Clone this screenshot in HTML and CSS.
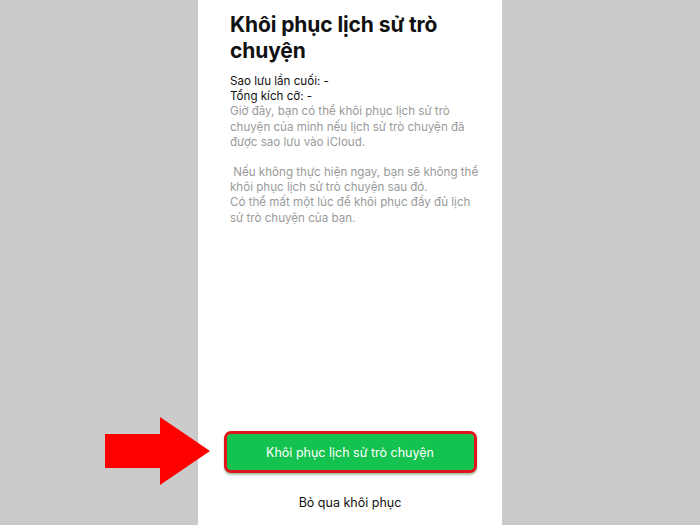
FILE: index.html
```html
<!DOCTYPE html>
<html lang="vi">
<head>
    <meta charset="UTF-8">
    <meta name="viewport" content="width=device-width, initial-scale=1.0">
    <title>Khôi phục lịch sử trò chuyện</title>
    <link rel="stylesheet" href="styles.css">
</head>
<body>

<div class="screen">
    <div class="content">
        <h1>Khôi phục lịch sử trò chuyện</h1>

        <div class="info">
            <p class="meta">Sao lưu lần cuối: -</p>
            <p class="meta">Tổng kích cỡ: -</p>
            <p class="desc">Giờ đây, bạn có thể khôi phục lịch sử trò chuyện của mình nếu lịch sử trò chuyện đã được sao lưu vào iCloud.</p>
            <p class="desc gap">&nbsp;Nếu không thực hiện ngay, bạn sẽ không thể khôi phục lịch sử trò chuyện sau đó.<br>Có thể mất một lúc để khôi phục đầy đủ lịch sử trò chuyện của bạn.</p>
        </div>
    </div>

    <div class="actions">
        <button class="restore-btn">Khôi phục lịch sử trò chuyện</button>
        <button class="skip-btn">Bỏ qua khôi phục</button>
    </div>

    <!-- red pointer arrow over the left edge -->
    <svg class="pointer" width="106" height="70" viewBox="0 0 106 70">
        <polygon points="0,17 55,17 55,0 105,34 55,68 55,51 0,51" fill="#fe0000"/>
    </svg>
</div>

</body>
</html>
```

FILE: styles.css
```css
body {
    margin: 0;
    padding: 0;
    background: #cbcbcb;
    font-family: 'Inter', 'Liberation Sans', Arial, sans-serif;
}

.screen {
    position: relative;
    width: 700px;
    height: 525px;
    display: flex;
    flex-direction: column;
    align-items: center;
}

.content,
.actions {
    width: 304px;
    background: #ffffff;
    box-sizing: border-box;
}

.content {
    flex: 1;
    padding: 12px 20px 0 32px;
}

h1 {
    margin: 0;
    font-size: 21px;
    font-weight: 700;
    line-height: 26px;
    color: #111;
    letter-spacing: -0.1px;
}

.info {
    margin-top: 10px;
}

.info p {
    margin: 0;
    font-size: 11.6px;
    line-height: 15.2px;
}

.meta {
    color: #111;
}

.desc {
    color: #9a9a9a;
}

.desc.gap {
    margin-top: 15px;
}

.actions {
    display: flex;
    flex-direction: column;
    align-items: center;
    padding-bottom: 15px;
}

.restore-btn {
    width: 253px;
    height: 42px;
    border: 3px solid #e1141b;
    border-radius: 7px;
    background: #14c24f;
    color: #fff;
    font-family: inherit;
    font-size: 12.5px;
    box-shadow: 0 2px 2px rgba(0, 80, 0, 0.35);
}

.skip-btn {
    margin-top: 22px;
    border: none;
    background: none;
    padding: 0;
    font-family: inherit;
    font-size: 12.5px;
    line-height: 15px;
    color: #111;
}

.pointer {
    position: absolute;
    left: 105px;
    top: 417px;
}
```
